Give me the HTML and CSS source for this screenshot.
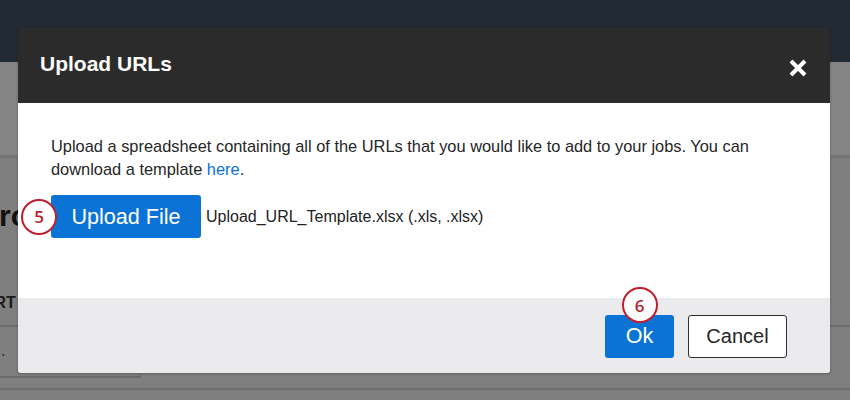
FILE: index.html
```html
<!DOCTYPE html>
<html lang="en">
<head>
<meta charset="utf-8">
<title>Upload URLs</title>
<link rel="stylesheet" href="styles.css">
</head>
<body>
<div class="page">
  <header class="nav"></header>
  <div class="band"></div>
  <main class="main">
    <h1 class="page-title">Process</h1>
    <div class="tabs"><span class="tab">EXPORT</span></div>
    <div class="field-row"><div class="field">.</div></div>
  </main>
</div>

<div class="modal" role="dialog" aria-labelledby="modal-title">
  <div class="modal-header">
    <h2 id="modal-title" class="modal-title">Upload URLs</h2>
    <button class="close" aria-label="Close">
      <svg width="18" height="18" viewBox="0 0 18 18"><path d="M2 2 L16 16 M16 2 L2 16" stroke="#fff" stroke-width="4" stroke-linecap="butt"/></svg>
    </button>
  </div>
  <div class="modal-body">
    <p class="desc">Upload a spreadsheet containing all of the URLs that you would like to add to your jobs. You can download a template <a href="#" class="link">here</a>.</p>
    <div class="upload-row">
      <button class="btn btn-primary btn-upload">Upload File<span class="step step-5">5</span></button>
      <span class="filename">Upload_URL_Template.xlsx (.xls, .xlsx)</span>
    </div>
  </div>
  <div class="modal-footer">
    <button class="btn btn-primary btn-ok">Ok<span class="step step-6">6</span></button>
    <button class="btn btn-cancel">Cancel</button>
  </div>
</div>
</body>
</html>
```
FILE: styles.css
```css
* { box-sizing: border-box; }
html, body { margin: 0; padding: 0; }
body {
  width: 850px;
  height: 400px;
  overflow: hidden;
  position: relative;
  font-family: "Liberation Sans", Arial, Helvetica, sans-serif;
  background: #7f7f7f;
}

/* background page (dimmed) */
.page { display: flex; flex-direction: column; height: 400px; }
.nav { height: 62px; background: #222a33; flex: none; }
.band { height: 96px; background: #848484; border-bottom: 3px solid #747474; flex: none; }
.main { flex: 1; background: #7f7f7f; margin-left: -21px; }
.page-title {
  margin: 38px 0 0 0;
  font-size: 30px;
  font-weight: 700;
  color: #111;
  line-height: 40px;
}
.tabs {
  margin-top: 52px;
  height: 39px;
  padding-top: 4px;
  border-bottom: 2px solid #6e6e6e;
  margin-right: -21px;
}
.tab {
  font-size: 16px;
  font-weight: 700;
  color: #1a1a1a;
  line-height: 22px;
  display: inline-block;
  margin-left: -29px;
  white-space: nowrap;
}
.field-row {
  padding-top: 11px;
  height: 63px;
  border-bottom: 2px solid #6e6e6e;
  margin-right: -21px;
}
.field {
  width: 162px;
  height: 40px;
  border-bottom: 2px solid #6a6a6a;
  border-right: 1px solid #6a6a6a;
  color: #222;
  font-size: 16px;
  line-height: 18px;
  padding: 4px 0 0 22px;
}

/* modal */
.modal {
  position: absolute;
  left: 18px;
  top: 28px;
  width: 812px;
  height: 345px;
  display: flex;
  flex-direction: column;
  border-radius: 0 0 3px 3px;
  box-shadow: 0 1px 3px rgba(0,0,0,0.25);
}
.modal-header {
  height: 75px;
  flex: none;
  background: #2b2b2b;
  display: flex;
  align-items: center;
  justify-content: space-between;
  padding: 0 23px 0 22px;
}
.modal-title {
  margin: 0;
  color: #fff;
  font-size: 21px;
  font-weight: 700;
  padding-bottom: 4px;
}
.close {
  background: none;
  border: 0;
  padding: 0;
  width: 18px;
  height: 18px;
  display: flex;
  margin-top: 5px;
  cursor: pointer;
}
.modal-body {
  flex: 1;
  background: #fff;
  padding: 32px 33px 0 33px;
}
.desc {
  margin: 0;
  font-size: 16.4px;
  line-height: 23px;
  color: #262626;
}
.link { color: #0b72d6; text-decoration: none; }
.upload-row {
  display: flex;
  align-items: center;
  gap: 5px;
  margin-top: 14px;
}
.filename { font-size: 16px; color: #222; }

.btn {
  position: relative;
  font-family: inherit;
  border-radius: 3px;
  height: 43px;
  padding: 0;
  cursor: pointer;
}
.btn-primary {
  background: #0b72d6;
  border: 0;
  color: #fff;
}
.btn-upload { width: 150px; font-size: 21.6px; }
.btn-ok { width: 69px; font-size: 21.5px; }
.btn-cancel {
  width: 99px;
  background: #fff;
  border: 1.5px solid #2e2e2e;
  color: #262626;
  font-size: 20px;
}

.modal-footer {
  height: 75px;
  flex: none;
  background: #ebebed;
  display: flex;
  justify-content: flex-end;
  align-items: flex-start;
  gap: 14px;
  padding: 17px 43px 0 0;
  border-radius: 0 0 3px 3px;
}

/* annotation step markers */
.step {
  position: absolute;
  width: 36px;
  height: 36px;
  border-radius: 50%;
  background: #fff;
  border: 2.5px solid #c01f2f;
  color: #b81f2d;
  font-family: "Open Sans", "Liberation Sans", sans-serif;
  font-size: 17px;
  font-weight: 600;
  display: flex;
  align-items: center;
  justify-content: center;
  line-height: 1;
}
.step-5 { left: -30px; top: 50%; transform: translateY(-50%); }
.step-6 { left: 50%; top: -28px; transform: translateX(-50%); }
```
